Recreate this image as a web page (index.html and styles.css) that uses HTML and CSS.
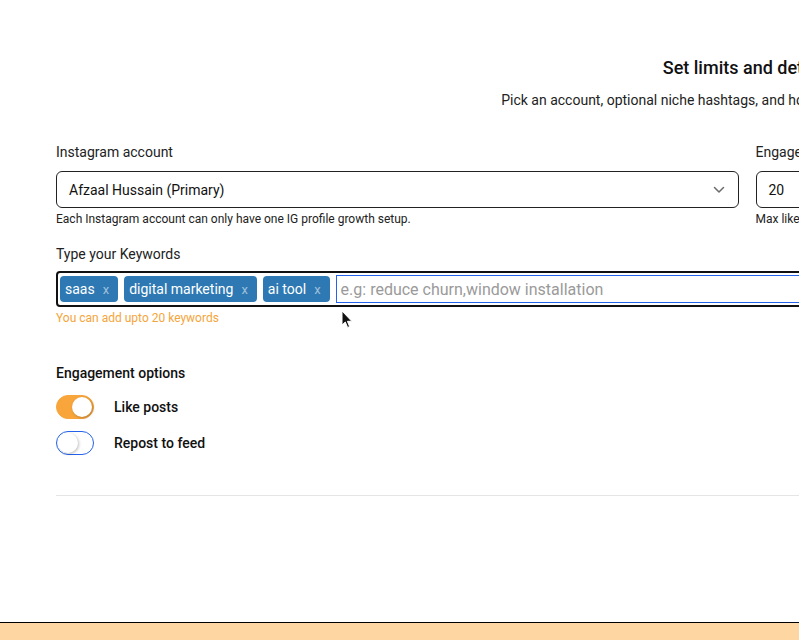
FILE: index.html
```html
<!DOCTYPE html>
<html lang="en">
<head>
  <meta charset="UTF-8" />
  <title>IG Profile Growth - Limits</title>
  <link rel="stylesheet" href="styles.css">
</head>
<body>

  <div class="page">
    <main class="main">

      <div class="head">
        <h1>Set limits and details</h1>
        <p class="sub">Pick an account, optional niche hashtags, and how many engagements per day.</p>
      </div>

      <div class="grid">
        <!-- Account -->
        <div class="field">
          <div class="label">Instagram account</div>
          <div class="select">
            <span>Afzaal Hussain (Primary)</span>
            <svg class="chevron" width="12" height="8" viewBox="0 0 12 8">
              <path d="M1.5 1.5 L6 6 L10.5 1.5" fill="none" stroke="#6b6b6b" stroke-width="1.5" stroke-linecap="round" stroke-linejoin="round"/>
            </svg>
          </div>
          <div class="hint">Each Instagram account can only have one IG profile growth setup.</div>
        </div>

        <!-- Limit -->
        <div class="field">
          <div class="label">Engagements per day</div>
          <div class="select">
            <span>20</span>
          </div>
          <div class="hint">Max likes and reposts per day for this account.</div>
        </div>
      </div>

      <!-- Keywords -->
      <div class="keywords">
        <div class="label kw-label">Type your Keywords</div>
        <div class="kw-box">
          <span class="chip">saas <span class="chip-x">x</span></span>
          <span class="chip">digital marketing <span class="chip-x">x</span></span>
          <span class="chip">ai tool <span class="chip-x">x</span></span>
          <input class="kw-input" type="text" placeholder="e.g: reduce churn,window installation">
          <svg class="cursor" width="12" height="19" viewBox="0 0 12 19">
            <path d="M1 1 L1 15 L4.3 12 L6.6 17.5 L8.6 16.6 L6.4 11.3 L10.8 11.3 Z" fill="#111" stroke="#fff" stroke-width="1" stroke-linejoin="round"/>
          </svg>
        </div>
        <div class="kw-hint">You can add upto 20 keywords</div>
      </div>

      <!-- Options -->
      <div class="options">
        <div class="opt-title">Engagement options</div>
        <div class="opt-row">
          <span class="toggle on"><span class="knob"></span></span>
          <span class="opt-label">Like posts</span>
        </div>
        <div class="opt-row">
          <span class="toggle"><span class="knob"></span></span>
          <span class="opt-label">Repost to feed</span>
        </div>
      </div>

      <hr class="divider">

    </main>

    <footer class="footer"></footer>
  </div>

</body>
</html>
```

FILE: styles.css
```css
html, body {
  margin: 0;
  overflow: hidden;
}

body {
  font-family: Roboto, 'Liberation Sans', sans-serif;
  color: #222;
  background: #fff;
}

.page {
  display: flex;
  flex-direction: column;
  min-height: 100vh;
}

.main {
  flex: 1;
  width: 1382px;
  margin-left: 56px;
}

.head {
  text-align: center;
  padding-top: 58px;
}

h1 {
  margin: 0;
  font-size: 18px;
  line-height: 20px;
  font-weight: 500;
  color: #111;
}

.sub {
  margin: 12px 0 0;
  font-size: 14px;
  line-height: 20px;
  color: #222;
  white-space: nowrap;
}

.grid {
  display: grid;
  grid-template-columns: 1fr 1fr;
  column-gap: 17px;
  margin-top: 32px;
}

.label {
  font-size: 14px;
  line-height: 20px;
  margin-bottom: 9px;
  color: #222;
}

.select {
  display: flex;
  align-items: center;
  justify-content: space-between;
  height: 35px;
  padding: 0 12px;
  border: 1px solid #222;
  border-radius: 6px;
  font-size: 14px;
  color: #111;
}

.chevron {
  margin-right: 1px;
}

.hint {
  margin-top: 3px;
  font-size: 12px;
  line-height: 16px;
  color: #222;
}

/* keyword tag input */
.keywords {
  margin-top: 17px;
}

.kw-label {
  margin-bottom: 7px;
}

.kw-box {
  position: relative;
  display: flex;
  align-items: center;
  gap: 6px;
  height: 32px;
  padding: 0 2px;
  border: 2px solid #111;
  border-radius: 4px;
}

.chip {
  display: inline-flex;
  align-items: center;
  gap: 8px;
  height: 26px;
  padding: 0 9px 0 5px;
  border-radius: 4px;
  background: #2e79b3;
  color: #fff;
  font-size: 14px;
  white-space: nowrap;
}

.chip-x {
  color: #9fc0da;
  font-size: 13px;
}

.kw-input {
  flex: 1;
  height: 28px;
  box-sizing: border-box;
  margin: 0;
  padding: 0 4px;
  border: 1px solid #2563eb;
  border-radius: 0;
  outline: none;
  font-family: Roboto, 'Liberation Sans', sans-serif;
  font-size: 16px;
  color: #222;
}

.kw-input::placeholder {
  color: #9a9a9a;
}

/* mouse pointer sitting over the field */
.cursor {
  position: absolute;
  left: 283px;
  top: 37px;
}

.kw-hint {
  margin-top: 3px;
  font-size: 12px;
  line-height: 16px;
  color: #f5a53c;
}

/* toggles */
.options {
  margin-top: 37px;
}

.opt-title {
  font-size: 14px;
  line-height: 20px;
  font-weight: 500;
  color: #111;
}

.opt-row {
  display: flex;
  align-items: center;
  gap: 20px;
  margin-top: 12px;
}

.toggle {
  position: relative;
  box-sizing: border-box;
  width: 38px;
  height: 24px;
  border-radius: 12px;
  border: 1px solid #2563eb;
  background: #fff;
}

.toggle.on {
  border-color: #f8a53c;
  background: #f8a53c;
}

.knob {
  position: absolute;
  top: 1px;
  left: 1px;
  width: 20px;
  height: 20px;
  border-radius: 50%;
  background: #fff;
  box-shadow: 1px 1px 3px rgba(0, 0, 0, 0.25);
}

.toggle.on .knob {
  left: 15px;
}

.opt-label {
  font-size: 14px;
  font-weight: 500;
  color: #111;
}

.divider {
  margin: 40px 0 0;
  border: none;
  border-top: 1px solid #e5e5e5;
}

.footer {
  height: 17px;
  border-top: 1px solid #000;
  background: #fdd6a2;
}
```
